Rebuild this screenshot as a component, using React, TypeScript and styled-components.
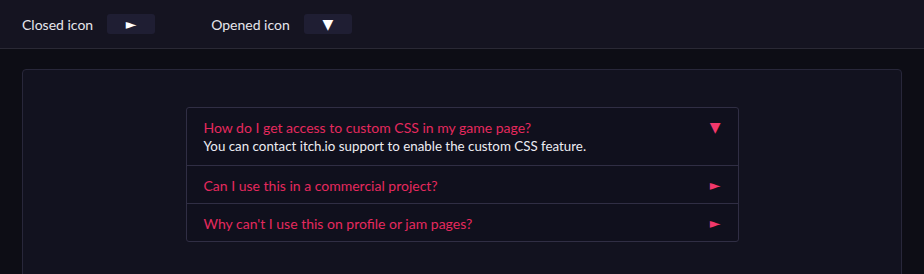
import styled, { createGlobalStyle } from "styled-components";

const faqs = [
  {
    q: "How do I get access to custom CSS in my game page?",
    a: "You can contact itch.io support to enable the custom CSS feature.",
    open: true,
  },
  { q: "Can I use this in a commercial project?", a: "", open: false },
  { q: "Why can't I use this on profile or jam pages?", a: "", open: false },
];

const App = () => {
  return (
    <>
      <GlobalStyle />
      <TopBar>
        <Option>
          <Label>Closed icon</Label>
          <IconBox>►</IconBox>
        </Option>
        <Option>
          <Label>Opened icon</Label>
          <IconBox $open>▼</IconBox>
        </Option>
      </TopBar>
      <Main>
        <Panel>
          <Accordion>
            {faqs.map((item) => (
              <Item key={item.q}>
                <Head>
                  <Question>{item.q}</Question>
                  <Arrow $open={item.open}>{item.open ? "▼" : "►"}</Arrow>
                </Head>
                {item.open && <Answer>{item.a}</Answer>}
              </Item>
            ))}
          </Accordion>
        </Panel>
      </Main>
    </>
  );
};

export default App;

const GlobalStyle = createGlobalStyle`
  body {
    margin: 0;
    background: #0d0d15;
    font-family: Lato, "Noto Sans", sans-serif;
    color: #e8e8ee;
    overflow: hidden;
  }
`;

const TopBar = styled.div`
  height: 48px;
  background: #151421;
  border-bottom: 1px solid #2a2935;
  display: flex;
  align-items: center;
  padding-left: 22px;
  gap: 56px;
`;

const Option = styled.div`
  display: flex;
  align-items: center;
  gap: 14px;
`;

const Label = styled.span`
  font-size: 14px;
  color: #e6e6ec;
`;

const IconBox = styled.div<{ $open?: boolean }>`
  width: 48px;
  height: 20px;
  border-radius: 3px;
  background: #1f1e33;
  color: #ffffff;
  display: flex;
  align-items: center;
  justify-content: center;
  font-family: "DejaVu Sans", sans-serif;
  font-size: 14px;
`;

const Main = styled.div`
  padding: 20px 22px 0;
`;

const Panel = styled.div`
  background: #12121f;
  border: 1px solid #28273a;
  border-radius: 4px;
  padding: 37px 0 40px;
  display: flex;
  justify-content: center;
`;

const Accordion = styled.div`
  width: 551px;
  border: 1px solid #302e44;
  border-radius: 3px;
  background: #10101d;
`;

const Item = styled.div`
  padding: 10px 17px 9px;
  border-top: 1px solid #302e44;
  &:first-child {
    border-top: none;
  }
`;

const Head = styled.div`
  display: flex;
  align-items: center;
  justify-content: space-between;
  height: 18px;
`;

const Question = styled.span`
  font-size: 14px;
  color: #e5295d;
`;

const Arrow = styled.span<{ $open: boolean }>`
  color: #f2386c;
  font-family: "DejaVu Sans", sans-serif;
  font-size: 14px;
  line-height: 18px;
`;

const Answer = styled.div`
  font-size: 13.33px;
  line-height: 20px;
  color: #ececf2;
`;
